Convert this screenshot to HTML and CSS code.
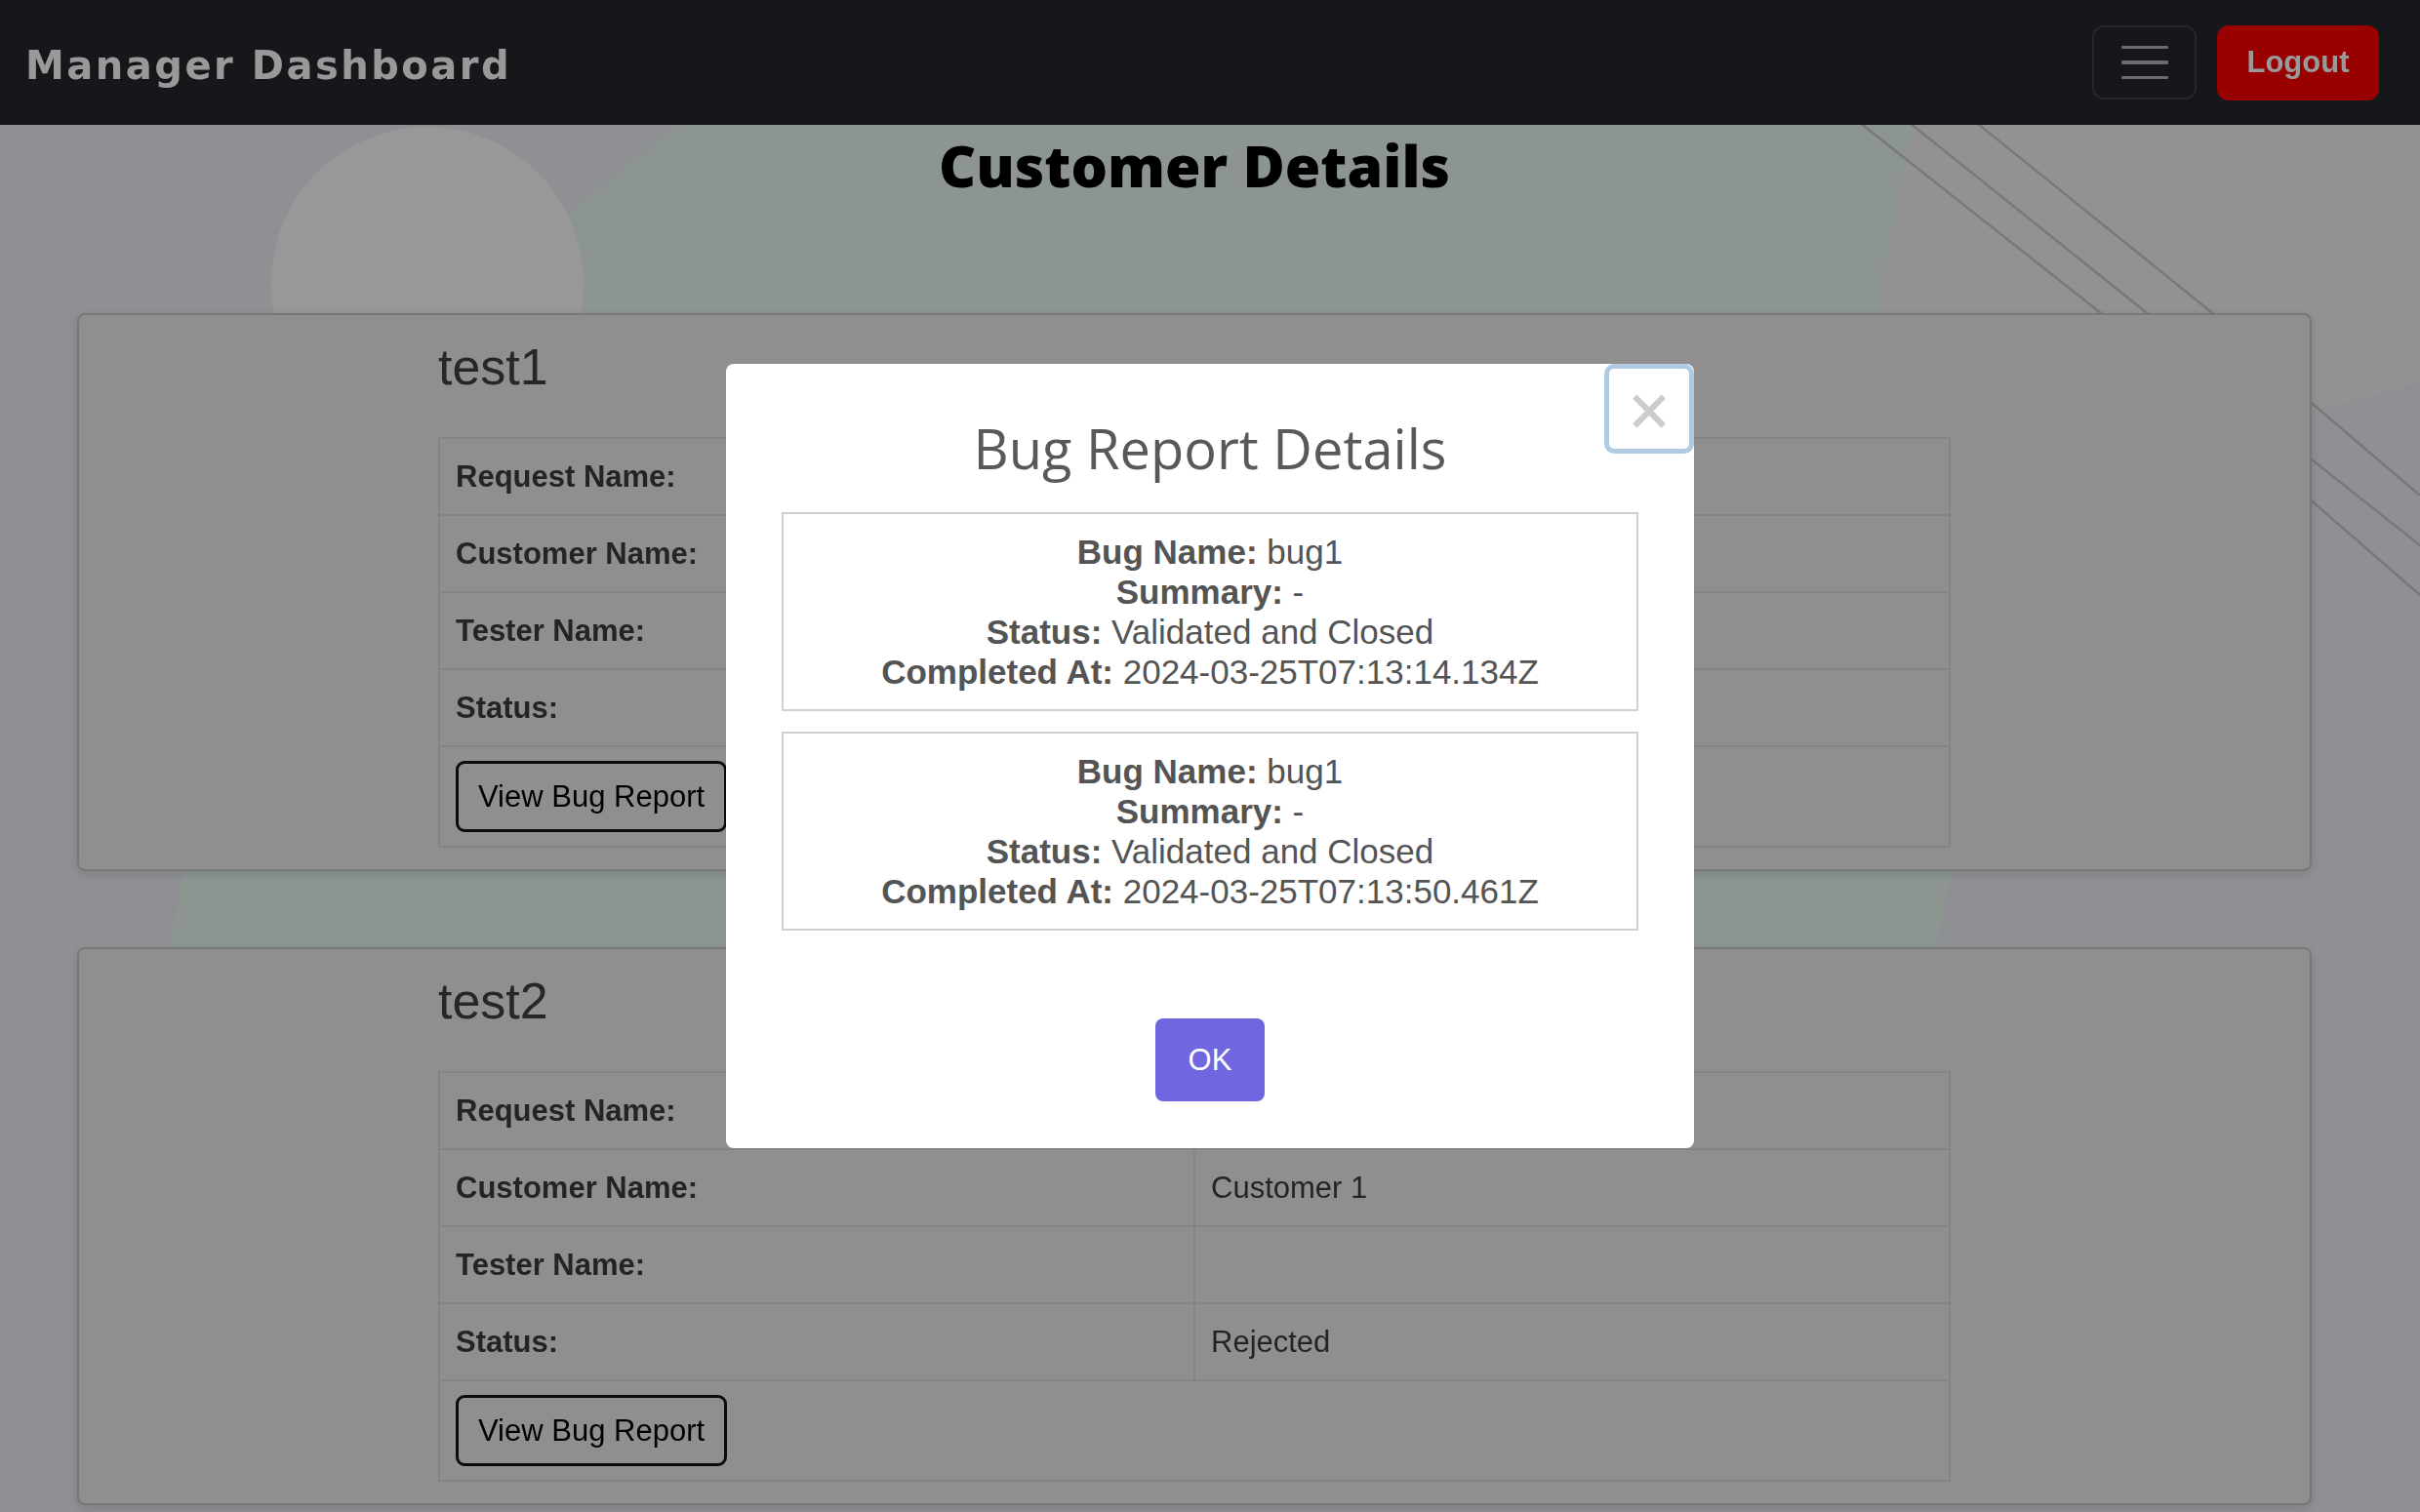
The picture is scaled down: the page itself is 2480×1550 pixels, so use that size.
FILE: index.html
```html
<!DOCTYPE html>
<html lang="en">
<head>
<meta charset="utf-8">
<title>Manager Dashboard</title>
<link rel="stylesheet" href="styles.css">
</head>
<body>
<svg class="bg-art" viewBox="0 0 2480 1550" preserveAspectRatio="none" aria-hidden="true">
  <rect width="2480" height="1550" fill="#edf0f7"/>
  <path d="M1935 0 L2480 0 L2480 392 L2367 423 L2150 520 L1900 420 Z" fill="#f4f4f4"/>
  <path d="M780 0 L696 128 L585 217 C420 380 240 680 187 900 L165 1020 L1975 1020 L2000 890 C1955 650 1915 420 1924 319 L1959 128 L1975 0 Z" fill="#e9f8ee"/>
  <circle cx="438" cy="290" r="160" fill="#fefefe"/>
  <g class="bg-lines">
    <path d="M1886 110 L2177 340"/>
    <path d="M1937 110 L2224 340"/>
    <path d="M2006 110 L2291 340"/>
    <path d="M2350 397 L2480 508"/>
    <path d="M2350 456 L2480 559"/>
    <path d="M2350 497 L2480 610"/>
  </g>
</svg>

<nav class="navbar">
  <span class="brand">Manager Dashboard</span>
  <div class="nav-actions">
    <button class="toggler" type="button" aria-label="Toggle navigation">
      <span class="toggler-icon"><i></i><i></i><i></i></span>
    </button>
    <button class="logout" type="button">Logout</button>
  </div>
</nav>

<main class="page">
  <h1 class="page-title">Customer Details</h1>

  <section class="card">
    <div class="card-inner">
      <h2 class="card-title">test1</h2>
      <table class="details">
        <tr><th>Request Name:</th><td></td></tr>
        <tr><th>Customer Name:</th><td></td></tr>
        <tr><th>Tester Name:</th><td></td></tr>
        <tr><th>Status:</th><td></td></tr>
        <tr><td colspan="2" class="action-cell"><button class="view-btn" type="button">View Bug Report</button></td></tr>
      </table>
    </div>
  </section>

  <section class="card">
    <div class="card-inner">
      <h2 class="card-title">test2</h2>
      <table class="details">
        <tr><th>Request Name:</th><td></td></tr>
        <tr><th>Customer Name:</th><td>Customer 1</td></tr>
        <tr><th>Tester Name:</th><td></td></tr>
        <tr><th>Status:</th><td>Rejected</td></tr>
        <tr><td colspan="2" class="action-cell"><button class="view-btn" type="button">View Bug Report</button></td></tr>
      </table>
    </div>
  </section>
</main>

<div class="overlay">
  <div class="modal" role="dialog">
    <button class="modal-close" type="button" aria-label="Close">&times;</button>
    <h2 class="modal-title">Bug Report Details</h2>
    <div class="bug-list">
      <div class="bug-item">
        <p class="bug-line"><strong>Bug Name:</strong> bug1</p>
        <p class="bug-line"><strong>Summary:</strong> -</p>
        <p class="bug-line"><strong>Status:</strong> Validated and Closed</p>
        <p class="bug-line"><strong>Completed At:</strong> 2024-03-25T07:13:14.134Z</p>
      </div>
      <div class="bug-item">
        <p class="bug-line"><strong>Bug Name:</strong> bug1</p>
        <p class="bug-line"><strong>Summary:</strong> -</p>
        <p class="bug-line"><strong>Status:</strong> Validated and Closed</p>
        <p class="bug-line"><strong>Completed At:</strong> 2024-03-25T07:13:50.461Z</p>
      </div>
    </div>
    <div class="modal-actions">
      <button class="ok-btn" type="button">OK</button>
    </div>
  </div>
</div>
</body>
</html>
```

FILE: styles.css
```css
* {
  box-sizing: border-box;
}

html,
body {
  margin: 0;
  height: 100%;
  overflow: hidden;
}

body {
  font-family: "Liberation Sans", Arial, sans-serif;
  background: #edf0f7;
}

.bg-art {
  position: fixed;
  top: 0;
  left: 0;
  width: 100%;
  height: 100%;
  z-index: -1;
}

.bg-lines path {
  stroke: #c9c9c9;
  stroke-width: 2.5;
  fill: none;
}

/* Navbar */
.navbar {
  height: 128px;
  background: #25272d;
  display: flex;
  align-items: center;
  justify-content: space-between;
  padding: 0 42px 0 26px;
}

.brand {
  color: #ffffff;
  font-family: "DejaVu Sans", Verdana, sans-serif;
  font-weight: 700;
  font-size: 40px;
  letter-spacing: 2.5px;
  padding-top: 6px;
}

.nav-actions {
  display: flex;
  align-items: center;
  gap: 21px;
}

.toggler {
  width: 107px;
  height: 76px;
  padding: 0;
  background: transparent;
  border: 2px solid rgba(255, 255, 255, 0.13);
  border-radius: 12px;
  display: flex;
  align-items: center;
  justify-content: center;
}

.toggler-icon {
  display: flex;
  flex-direction: column;
  gap: 12px;
  width: 48px;
}

.toggler-icon i {
  display: block;
  height: 3.5px;
  background: #b3b3b3;
  border-radius: 1px;
}

.logout {
  width: 166px;
  height: 77px;
  background: #ff0000;
  color: #ffffff;
  border: none;
  border-radius: 12px;
  font-family: "Liberation Sans", Arial, sans-serif;
  font-weight: 700;
  font-size: 31px;
}

/* Page */
.page {
  padding: 0 111px 0 79px;
}

.page-title {
  margin: 4px 0 115px;
  text-align: center;
  font-family: "Open Sans", "DejaVu Sans", sans-serif;
  font-weight: 800;
  font-size: 59px;
  line-height: 74px;
  color: #000000;
}

.card {
  background: #efefef;
  border: 2px solid #c8c8c8;
  border-radius: 8px;
  box-shadow: 0 3px 10px rgba(0, 0, 0, 0.12);
  padding: 22px 0 22px;
}

.card + .card {
  margin-top: 78px;
}

.card-inner {
  width: 1550px;
  margin: 0 auto;
}

.card-title {
  margin: 0 0 41px;
  font-size: 52px;
  line-height: 62px;
  font-weight: 400;
  color: #424242;
}

.details {
  width: 100%;
  border-collapse: collapse;
  table-layout: fixed;
  font-size: 31px;
  color: #3c3c3c;
}

.details th,
.details td {
  border: 2px solid #dcdcdc;
  padding: 20px 16px;
  height: 79px;
  line-height: 37px;
  text-align: left;
  vertical-align: middle;
}

.details th {
  width: 50%;
  font-weight: 700;
}

.details .action-cell {
  height: auto;
  padding: 14px 16px;
}

.view-btn {
  font-family: "Liberation Sans", Arial, sans-serif;
  font-size: 31px;
  line-height: 35px;
  color: #000000;
  background: #efefef;
  border: 3px solid #151515;
  border-radius: 9px;
  padding: 16px 20px;
  display: block;
}

/* Modal */
.overlay {
  position: fixed;
  top: 0;
  left: 0;
  right: 0;
  bottom: 0;
  background: rgba(0, 0, 0, 0.4);
  display: flex;
  align-items: center;
  justify-content: center;
}

.modal {
  position: relative;
  width: 992px;
  background: #ffffff;
  border-radius: 8px;
  padding: 48px 0 48px;
  text-align: center;
}

.modal-close {
  position: absolute;
  top: 0;
  right: 0;
  width: 92px;
  height: 92px;
  padding: 0;
  border: none;
  background: transparent;
  color: #cccccc;
  font-family: "DejaVu Sans Mono", "Liberation Mono", monospace;
  font-size: 74px;
  line-height: 92px;
  border-radius: 10px;
  box-shadow: inset 0 0 0 5px rgba(100, 150, 200, 0.5);
}

.modal-title {
  margin: 0;
  font-family: "Open Sans", "DejaVu Sans", sans-serif;
  font-weight: 500;
  font-size: 56px;
  line-height: 76px;
  color: #595959;
}

.bug-list {
  margin: 28px 57px 0;
  display: flex;
  flex-direction: column;
  gap: 21px;
}

.bug-item {
  border: 2px solid #cfcfcf;
  padding: 18px 10px;
  font-size: 35px;
  color: #545454;
}

.bug-line {
  margin: 0;
  line-height: 41px;
}

.bug-line strong {
  font-weight: 700;
}

.modal-actions {
  margin-top: 90px;
  display: flex;
  justify-content: center;
}

.ok-btn {
  width: 112px;
  padding: 24px 0;
  background: #7066e0;
  color: #ffffff;
  border: none;
  border-radius: 8px;
  font-family: "Liberation Sans", Arial, sans-serif;
  font-size: 31px;
  line-height: 37px;
}
```
